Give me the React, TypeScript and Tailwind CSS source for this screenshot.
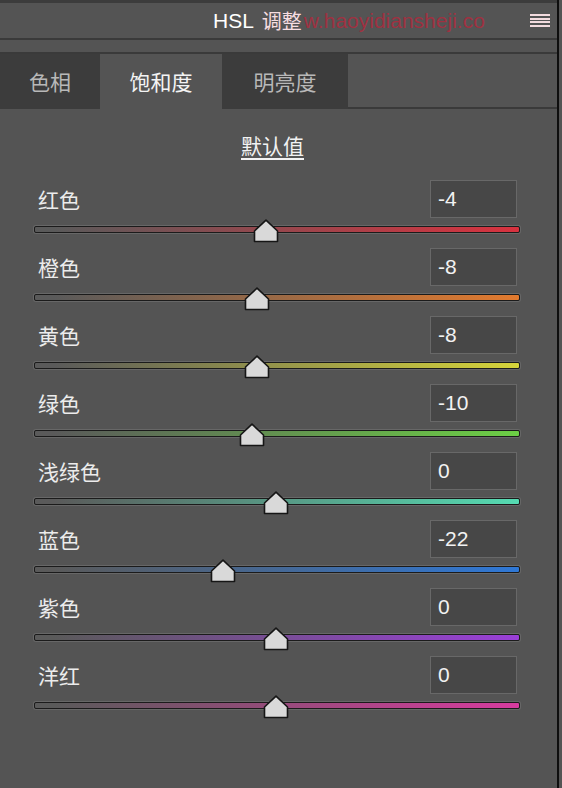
const channels = [
  { name: "红色", value: -4, color: "#d8323f" },
  { name: "橙色", value: -8, color: "#e27a2e" },
  { name: "黄色", value: -8, color: "#d6d43a" },
  { name: "绿色", value: -10, color: "#6ccf45" },
  { name: "浅绿色", value: 0, color: "#55dbb2" },
  { name: "蓝色", value: -22, color: "#2f78d6" },
  { name: "紫色", value: 0, color: "#9a3fd8" },
  { name: "洋红", value: 0, color: "#d83b9f" },
];

const cjk = "font-['Noto_Sans_CJK_SC',sans-serif]";
const num = "font-['Liberation_Sans','Noto_Sans_CJK_SC',sans-serif]";

function Thumb({ value }: { value: number }) {
  // track is 486px wide, 0 sits in the middle
  const center = 242 + value * 2.43;
  return (
    <svg
      width="26"
      height="24"
      viewBox="0 0 26 24"
      className="absolute top-[-7px]"
      style={{ left: center - 13 }}
    >
      <polygon
        points="1.5,12 13,1.2 24.5,12 24.5,22.5 1.5,22.5"
        fill="#d9d9d9"
        stroke="#161616"
        strokeWidth="1.6"
        strokeLinejoin="round"
      />
    </svg>
  );
}

function SliderRow({ name, value, color }: { name: string; value: number; color: string }) {
  return (
    <div className="flex flex-col pb-[15px]">
      <div className="flex items-center justify-between pl-[38px] pr-[40px]">
        <span className={`${cjk} text-[21px] leading-none text-[#ececec]`}>{name}</span>
        <div className="flex h-[38px] w-[87px] items-center border border-[#686868] bg-[#474747] pl-[7px]">
          <span className={`${num} text-[21px] text-[#f2f2f2]`}>{value}</span>
        </div>
      </div>
      <div className="relative ml-[34px] mt-[8px] h-[7px] w-[486px]">
        <div
          className="h-full w-full rounded-[2px] border border-[#1b1b1b] shadow-[0_0_0_1px_#676767]"
          style={{ background: `linear-gradient(to right, #5a5a5a 4%, ${color})` }}
        />
        <Thumb value={value} />
      </div>
    </div>
  );
}

export default function App() {
  return (
    <div className="flex h-[788px] w-[562px] overflow-hidden bg-[#545454]">
      <div className="flex w-[557px] flex-col">
        <div className="h-[3px] bg-[#3c3c3c]" />

        {/* panel title bar */}
        <div className="flex h-[35px] items-center pl-[213px] pr-[7px]">
          <span className={`${num} text-[21px] leading-none text-white`}>HSL</span>
          <span className={`${cjk} ml-[8px] text-[20px] leading-none text-[#f6dde0]`}>调整</span>
          <span className="ml-[2px] font-['Liberation_Sans',sans-serif] text-[21px] leading-none text-[#b3283c]/80">
            w.haoyidiansheji.co
          </span>
          <div className="ml-auto flex h-[13px] w-[20px] flex-col justify-between">
            <div className="h-[2px] bg-[#f3dcdf]" />
            <div className="h-[2px] bg-[#f3dcdf]" />
            <div className="h-[2px] bg-[#f3dcdf]" />
            <div className="h-[2px] bg-[#f3dcdf]" />
          </div>
        </div>
        <div className="h-[2px] bg-[#3a3a3a]" />
        <div className="h-[12px]" />

        {/* tabs */}
        <div className={`flex h-[57px] border-t-2 border-[#3a3a3a] ${cjk} text-[21px]`}>
          <div className="flex w-[100px] items-center justify-center bg-[#3c3c3c] text-[#b8b8b8]">色相</div>
          <div className="flex w-[122px] items-center justify-center text-[#f4f4f4]">饱和度</div>
          <div className="flex w-[126px] items-center justify-center bg-[#3c3c3c] text-[#b8b8b8]">明亮度</div>
          <div className="flex-1 border-b-2 border-[#3a3a3a]" />
        </div>

        <div className="flex justify-center pr-[12px] pt-[22px]">
          <span className={`${cjk} text-[21px] leading-[28px] text-[#f2f2f2] underline underline-offset-[4px]`}>
            默认值
          </span>
        </div>

        <div className="mt-[21px] flex flex-col">
          {channels.map((c) => (
            <SliderRow key={c.name} {...c} />
          ))}
        </div>
      </div>
      <div className="w-[2px] bg-[#0e0e0e]" />
    </div>
  );
}
